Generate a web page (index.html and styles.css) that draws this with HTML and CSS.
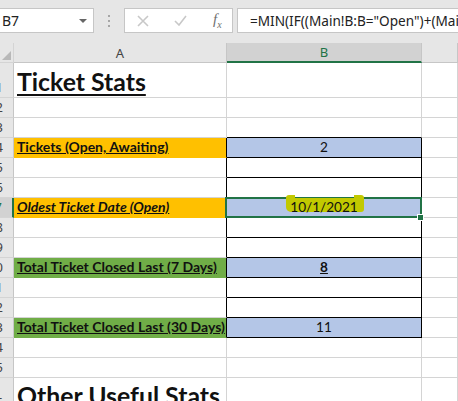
FILE: index.html
```html
<!DOCTYPE html>
<html lang="en">
<head>
    <meta charset="UTF-8">
    <title>Ticket Stats</title>
    <link rel="stylesheet" href="styles.css">
</head>
<body>
    <div class="toolbar">
        <div class="name-box">
            <span>B7</span>
            <svg class="drop" width="8" height="4" viewBox="0 0 8 4"><path d="M0 0h8L4 4z"/></svg>
        </div>
        <div class="grip"><i></i><i></i><i></i></div>
        <div class="fx-box">
            <svg width="12" height="12" viewBox="0 0 12 12"><path d="M1 1l10 10M11 1L1 11"/></svg>
            <svg width="13" height="11" viewBox="0 0 13 11"><path d="M1 6l4 4 7-9"/></svg>
            <span class="fx">f<sub>x</sub></span>
        </div>
        <div class="formula">=MIN(IF((Main!B:B="Open")+(Main!B:B="Awaiting"),Main!D:D))</div>
    </div>

    <div class="sheet">
        <!-- column headers -->
        <div class="corner"><span></span></div>
        <div class="col-head">A</div>
        <div class="col-head active">B</div>
        <div class="col-head"></div>

        <div class="row-head">1</div>
        <div class="cell title"><span>Ticket Stats</span></div>
        <div class="cell"></div>
        <div class="cell"></div>

        <div class="row-head">2</div>
        <div class="cell"></div>
        <div class="cell"></div>
        <div class="cell"></div>

        <div class="row-head">3</div>
        <div class="cell"></div>
        <div class="cell box-top"></div>
        <div class="cell"></div>

        <div class="row-head">4</div>
        <div class="cell label orange edge"><span>Tickets (Open, Awaiting)</span></div>
        <div class="cell value box blue">2</div>
        <div class="cell"></div>

        <div class="row-head">5</div>
        <div class="cell edge"></div>
        <div class="cell box"></div>
        <div class="cell"></div>

        <div class="row-head">6</div>
        <div class="cell edge"></div>
        <div class="cell box"></div>
        <div class="cell"></div>

        <div class="row-head active">7</div>
        <div class="cell label orange edge italic"><span>Oldest Ticket Date (Open)</span></div>
        <div class="cell value box blue selected">
            <span class="marked">10/1/2021</span>
            <div class="sel"></div>
            <div class="handle"></div>
        </div>
        <div class="cell"></div>

        <div class="row-head">8</div>
        <div class="cell edge"></div>
        <div class="cell box"></div>
        <div class="cell"></div>

        <div class="row-head">9</div>
        <div class="cell edge"></div>
        <div class="cell box"></div>
        <div class="cell"></div>

        <div class="row-head">10</div>
        <div class="cell label green edge"><span>Total Ticket Closed Last (7 Days)</span></div>
        <div class="cell value box blue"><b><u>8</u></b></div>
        <div class="cell"></div>

        <div class="row-head">11</div>
        <div class="cell edge"></div>
        <div class="cell box"></div>
        <div class="cell"></div>

        <div class="row-head">12</div>
        <div class="cell edge"></div>
        <div class="cell box"></div>
        <div class="cell"></div>

        <div class="row-head">13</div>
        <div class="cell label green edge"><span>Total Ticket Closed Last (30 Days)</span></div>
        <div class="cell value box blue">11</div>
        <div class="cell"></div>

        <div class="row-head">14</div>
        <div class="cell"></div>
        <div class="cell"></div>
        <div class="cell"></div>

        <div class="row-head">15</div>
        <div class="cell"></div>
        <div class="cell"></div>
        <div class="cell"></div>

        <div class="row-head">16</div>
        <div class="cell title plain"><span>Other Useful Stats</span></div>
        <div class="cell"></div>
        <div class="cell"></div>
    </div>
</body>
</html>
```

FILE: styles.css
```css
body {
    margin: 0;
    background-color: #ffffff;
    font-family: "Noto Sans", sans-serif;
    overflow: hidden;
}

/* formula bar */
.toolbar {
    height: 43px;
    box-sizing: border-box;
    padding-top: 8px;
    background-color: #e6e6e6;
    display: flex;
    align-items: flex-start;
}
.name-box {
    width: 95px;
    height: 25px;
    margin-left: -1px;
    box-sizing: border-box;
    background-color: #fff;
    border: 1px solid #c6c6c6;
    display: flex;
    align-items: center;
    justify-content: space-between;
    padding: 0 6px 0 2px;
    font-size: 14px;
    color: #222;
}
.drop path {
    fill: #666;
}
.grip {
    width: 30px;
    height: 25px;
    display: flex;
    flex-direction: column;
    align-items: center;
    justify-content: center;
    gap: 3px;
}
.grip i {
    width: 2px;
    height: 2px;
    background-color: #a6a6a6;
}
.fx-box {
    width: 109px;
    height: 25px;
    box-sizing: border-box;
    background-color: #fff;
    border: 1px solid #c6c6c6;
    display: flex;
    align-items: center;
    padding-left: 12px;
    gap: 25px;
}
.fx-box svg path {
    fill: none;
    stroke: #c8c8c8;
    stroke-width: 1.6;
}
.fx {
    font-family: "Liberation Serif", serif;
    font-style: italic;
    font-size: 15px;
    color: #707070;
    margin-left: 1px;
}
.fx sub {
    font-size: 10px;
}
.formula {
    flex: 1;
    height: 25px;
    margin-left: 4px;
    box-sizing: border-box;
    background-color: #fff;
    border: 1px solid #c6c6c6;
    border-right: none;
    padding-left: 12px;
    font-size: 13.6px;
    line-height: 23px;
    color: #222;
    white-space: nowrap;
    overflow: hidden;
}

/* the grid of cells */
.sheet {
    display: grid;
    grid-template-columns: 14px 213px 195px 1fr;
    grid-template-rows: 20px 35px repeat(14, 20px) 35px;
    font-family: Lato, sans-serif;
    font-size: 14px;
    color: #111;
}
.sheet > div {
    box-sizing: border-box;
    border-right: 1px solid #d4d4d4;
    border-bottom: 1px solid #d4d4d4;
    min-width: 0;
}
.corner {
    background-color: #e6e6e6;
    position: relative;
}
.corner span {
    position: absolute;
    right: 2px;
    bottom: 2px;
    width: 0;
    height: 0;
    border-left: 9px solid transparent;
    border-bottom: 9px solid #b8b8b8;
}
.col-head {
    background-color: #e6e6e6;
    font-family: "Noto Sans", sans-serif;
    font-size: 13px;
    color: #444;
    display: flex;
    align-items: center;
    justify-content: center;
    border-right-color: #c6c6c6 !important;
    border-bottom-color: #c6c6c6 !important;
}
.col-head.active {
    background-color: #d2d2d2;
    color: #217346;
    border-bottom: 2px solid #217346 !important;
}
.row-head {
    background-color: #e6e6e6;
    font-family: "Noto Sans", sans-serif;
    font-size: 13px;
    color: #444;
    display: flex;
    align-items: flex-end;
    justify-content: flex-end;
    padding: 0 10px 1px 0;
    white-space: nowrap;
    overflow: hidden;
    border-right-color: #c6c6c6 !important;
}
.row-head.active {
    background-color: #d2d2d2;
    color: #217346;
    border-right: 2px solid #217346 !important;
}
.cell {
    display: flex;
    align-items: flex-end;
    padding: 0 3px 2px;
    white-space: nowrap;
    position: relative;
}
.title {
    font-size: 24.8px;
    font-weight: bold;
    text-decoration: underline;
    text-decoration-thickness: 2px;
    text-underline-offset: 3px;
    padding-bottom: 1px;
}
.title.plain {
    text-decoration: none;
    align-items: flex-start;
    padding-top: 3px;
}
.label {
    font-weight: bold;
    text-decoration: underline;
}
.italic {
    font-style: italic;
}
.value {
    justify-content: center;
    font-size: 13.6px;
}
.orange {
    background-color: #ffc000;
    border-bottom-color: #ffc000 !important;
}
.green {
    background-color: #70ad47;
    border-bottom-color: #70ad47 !important;
}
.blue {
    background-color: #b4c6e7;
}
.edge {
    border-right-color: #000 !important;
}
.box {
    border-right-color: #000 !important;
    border-bottom-color: #000 !important;
}
.box-top {
    border-bottom-color: #000 !important;
}

/* selected cell B7 with the highlighter mark */
.marked {
    position: relative;
    z-index: 2;
}
.marked::before {
    content: "";
    position: absolute;
    left: -4px;
    right: -6px;
    top: -1px;
    bottom: 3px;
    background-color: #c2c900;
    border-radius: 2px 2px 3px 5px;
    z-index: -1;
}
.marked::after {
    content: "";
    position: absolute;
    left: -4px;
    right: -6px;
    top: -4px;
    height: 6px;
    background: linear-gradient(to right, #c2c900 9px, transparent 9px, transparent calc(100% - 10px), #c2c900 calc(100% - 10px));
    border-radius: 3px 3px 0 0;
    z-index: -1;
}
.sel {
    position: absolute;
    left: -2px;
    top: -1px;
    right: -1px;
    bottom: -1px;
    border: 2px solid #217346;
    z-index: 1;
}
.handle {
    position: absolute;
    right: -3px;
    bottom: -4px;
    width: 5px;
    height: 5px;
    background-color: #217346;
    border: 1px solid #fff;
    z-index: 4;
}
```
